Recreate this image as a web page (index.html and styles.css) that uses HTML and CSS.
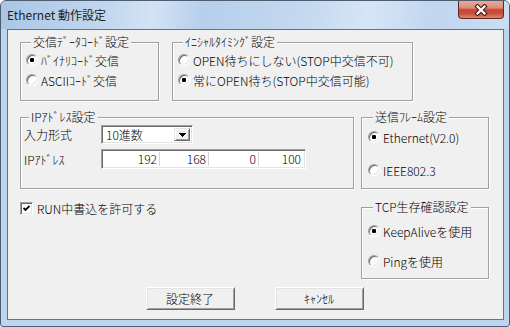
FILE: index.html
```html
<!DOCTYPE html>
<html lang="ja">
<head>
    <meta charset="UTF-8">
    <title>Ethernet 動作設定</title>
    <link rel="stylesheet" href="styles.css">
</head>
<body>
    <div class="window">
        <div class="titlebar">
            <span class="caption">Ethernet 動作設定</span>
            <button class="close-btn">
                <svg width="14" height="12" viewBox="0 0 14 12">
                    <path d="M3.5 2.5L10.5 9.5M10.5 2.5L3.5 9.5" stroke="#4a2020" stroke-width="4.5" stroke-linecap="square"/>
                    <path d="M3.5 2.5L10.5 9.5M10.5 2.5L3.5 9.5" stroke="#fff" stroke-width="2.2" stroke-linecap="square"/>
                </svg>
            </button>
        </div>

        <div class="client">
            <div class="row-top">
                <div class="group group-code">
                    <div class="group-title">交信ﾃﾞｰﾀｺｰﾄﾞ設定</div>
                    <div class="options">
                        <div class="option"><span class="radio checked"></span>ﾊﾞｲﾅﾘｺｰﾄﾞ交信</div>
                        <div class="option"><span class="radio"></span>ASCIIｺｰﾄﾞ交信</div>
                    </div>
                </div>
                <div class="group group-timing">
                    <div class="group-title">ｲﾆｼｬﾙﾀｲﾐﾝｸﾞ設定</div>
                    <div class="options">
                        <div class="option"><span class="radio"></span>OPEN待ちにしない(STOP中交信不可)</div>
                        <div class="option"><span class="radio checked"></span>常にOPEN待ち(STOP中交信可能)</div>
                    </div>
                </div>
            </div>

            <div class="row-mid">
                <div class="col-left">
                    <div class="group group-ip">
                        <div class="group-title">IPｱﾄﾞﾚｽ設定</div>
                        <div class="field field-format">
                            <span class="field-label">入力形式</span>
                            <div class="combo">
                                <span class="combo-text">10進数</span>
                                <span class="combo-btn">
                                    <svg width="7" height="4" viewBox="0 0 7 4"><path d="M0 0H7V1H6V2H5V3H4V4H3V3H2V2H1V1H0Z" fill="#000"/></svg>
                                </span>
                            </div>
                        </div>
                        <div class="field field-ip">
                            <span class="field-label">IPｱﾄﾞﾚｽ</span>
                            <div class="ip-box">
                                <span class="ip-seg">192</span>
                                <span class="ip-seg">168</span>
                                <span class="ip-seg">0</span>
                                <span class="ip-seg">100</span>
                            </div>
                        </div>
                    </div>
                    <div class="check-row">
                        <span class="checkbox">
                            <svg width="7" height="7" viewBox="0 0 7 7"><path d="M0.5 3L2.5 5L6.5 1" fill="none" stroke="#000" stroke-width="1.8"/></svg>
                        </span>
                        RUN中書込を許可する
                    </div>
                </div>

                <div class="col-right">
                    <div class="group group-frame">
                        <div class="group-title">送信ﾌﾚｰﾑ設定</div>
                        <div class="options">
                            <div class="option"><span class="radio checked"></span>Ethernet(V2.0)</div>
                            <div class="option"><span class="radio"></span>IEEE802.3</div>
                        </div>
                    </div>
                    <div class="group group-tcp">
                        <div class="group-title">TCP生存確認設定</div>
                        <div class="options">
                            <div class="option"><span class="radio checked"></span>KeepAliveを使用</div>
                            <div class="option"><span class="radio"></span>Pingを使用</div>
                        </div>
                    </div>
                </div>
            </div>

            <div class="buttons">
                <button class="btn">設定終了</button>
                <button class="btn">ｷｬﾝｾﾙ</button>
            </div>
        </div>
    </div>
</body>
</html>
```

FILE: styles.css
```css
* {
    box-sizing: border-box;
}
body {
    margin: 0;
    font-family: "Noto Sans CJK JP", sans-serif;
    font-size: 12px;
    font-weight: 300;
    color: #000;
}
.window {
    width: 510px;
    height: 327px;
    display: flex;
    flex-direction: column;
    border: 1px solid #4f5d6e;
    border-radius: 6px 6px 3px 3px;
    background: #bdd5ef;
    overflow: hidden;
}
.titlebar {
    height: 28px;
    display: flex;
    align-items: flex-start;
    justify-content: space-between;
    background: linear-gradient(100deg, #a9c6e7 0%, #c3d8ef 22%, #d3e3f5 30%, #b6cfeb 40%, #c6daf1 62%, #d6e6f7 72%, #c0d6ef 85%, #cadef3 100%);
}
.caption {
    padding-left: 6px;
    line-height: 27px;
    font-weight: 400;
    color: #1e1e1e;
}
.close-btn {
    width: 46px;
    height: 18px;
    margin-right: 5px;
    padding: 0;
    display: flex;
    align-items: center;
    justify-content: center;
    border: 1px solid #5d2a26;
    border-top: none;
    border-radius: 0 0 4px 4px;
    background: linear-gradient(#e9aa9c 0%, #dc8d7c 40%, #c5452f 52%, #c9523c 75%, #dc8670 100%);
}
.client {
    flex: 1;
    margin: 0 5px 6px 6px;
    border: 1px solid #62748a;
    background: #f0f0f0;
    padding: 12px 14px 0 12px;
}

/* group boxes */
.group {
    border: 1px solid #a0a0a0;
    box-shadow: 1px 1px 0 #fff, inset 1px 1px 0 #fff;
}
.group-title {
    width: fit-content;
    margin: -7px 0 0 5px;
    padding: 0 2px;
    line-height: 12px;
    background: #f0f0f0;
}
.options {
    display: flex;
    flex-direction: column;
}
.option {
    height: 20px;
    display: flex;
    align-items: center;
    gap: 3px;
    white-space: nowrap;
}
.row-top {
    display: flex;
    gap: 13px;
}
.group-code,
.group-timing {
    height: 59px;
    padding-left: 5px;
}
.group-code {
    width: 139px;
}
.group-timing {
    width: 241px;
}
.group-code .options,
.group-timing .options {
    margin-top: 2px;
}

.row-mid {
    margin-top: 16px;
    display: flex;
    gap: 7px;
}
.col-left {
    width: 334px;
}
.col-right {
    width: 128px;
}
.group-ip {
    height: 72px;
    padding-left: 3px;
}
.group-frame,
.group-tcp {
    height: 72px;
    padding-left: 6px;
}
.group-frame .options {
    margin-top: 4px;
    gap: 13px;
}
.group-tcp {
    margin-top: 18px;
}
.group-tcp .options {
    margin-top: 8px;
    gap: 10px;
}

/* ip settings */
.field {
    display: flex;
    align-items: center;
}
.field-format {
    margin-top: 2px;
}
.field-ip {
    margin-top: 5px;
}
.field-label {
    width: 77px;
}
.combo,
.ip-box,
.checkbox {
    background: #fff;
    border: 1px solid;
    border-color: #a0a0a0 #fff #fff #a0a0a0;
    box-shadow: inset 1px 1px 0 #696969, inset -1px -1px 0 #e3e3e3;
}
.combo {
    width: 92px;
    height: 19px;
    display: flex;
    padding: 2px;
}
.combo-text {
    flex: 1;
    padding-left: 2px;
    line-height: 13px;
}
.combo-btn {
    width: 16px;
    display: flex;
    align-items: center;
    justify-content: center;
    background: #f0f0f0;
    border: 1px solid;
    border-color: #e3e3e3 #696969 #696969 #e3e3e3;
    box-shadow: inset 1px 1px 0 #fff, inset -1px -1px 0 #a0a0a0;
}
.ip-box {
    width: 205px;
    height: 20px;
    display: grid;
    grid-template-columns: 55px 49px 50px 1fr;
    padding: 2px;
}
.ip-seg {
    text-align: right;
    padding-right: 2px;
    line-height: 14px;
}
.ip-seg + .ip-seg {
    border-left: 1px solid #d4d4d4;
}

/* checkbox */
.check-row {
    margin-top: 13px;
    height: 13px;
    display: flex;
    align-items: center;
    gap: 4px;
    white-space: nowrap;
}
.checkbox {
    width: 13px;
    height: 13px;
    flex: none;
    display: flex;
    align-items: center;
    justify-content: center;
}

/* radio */
.radio {
    width: 12px;
    height: 12px;
    flex: none;
    display: flex;
    align-items: center;
    justify-content: center;
    border-radius: 50%;
    background: #fff;
    border: 1px solid;
    border-color: #a0a0a0 #fff #fff #a0a0a0;
    box-shadow: inset 1px 1px 0 #696969, inset -1px -1px 0 #e3e3e3;
}
.radio.checked::after {
    content: "";
    width: 4px;
    height: 4px;
    border-radius: 1px;
    background: #000;
}

/* buttons */
.buttons {
    margin-top: 8px;
    display: flex;
    justify-content: center;
    gap: 40px;
}
.btn {
    width: 89px;
    height: 23px;
    padding: 0;
    font: inherit;
    color: #000;
    background: #f0f0f0;
    border: 1px solid;
    border-color: #fff #696969 #696969 #fff;
    box-shadow: inset 1px 1px 0 #e3e3e3, inset -1px -1px 0 #a0a0a0;
}
```
